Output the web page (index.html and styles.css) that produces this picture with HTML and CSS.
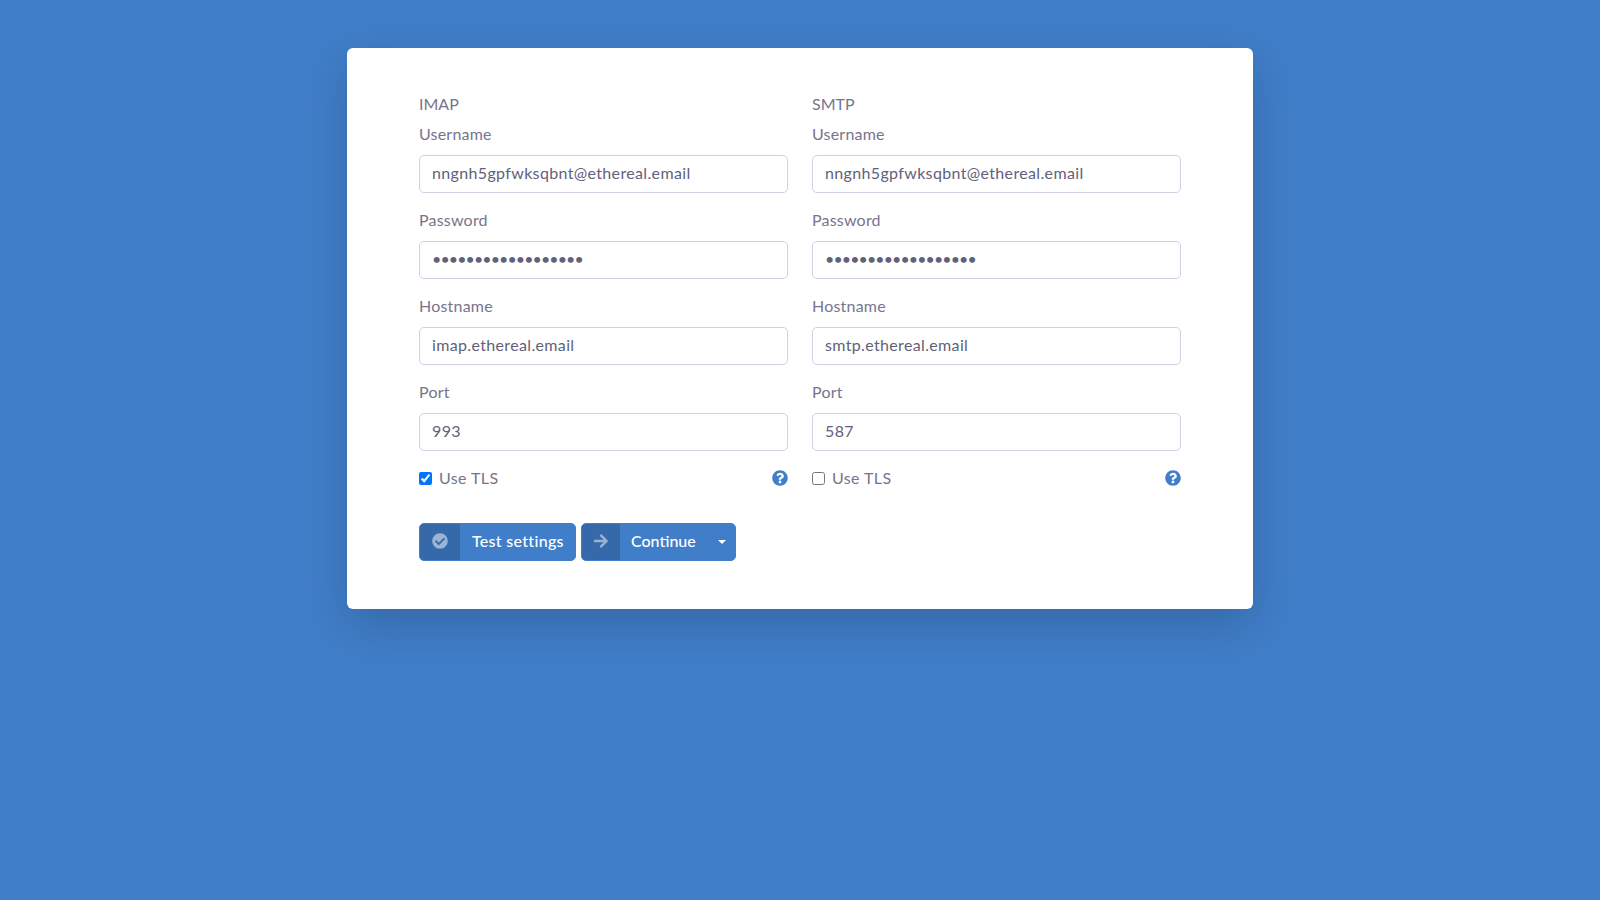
FILE: index.html
```html
<!DOCTYPE html>
<html lang="en">
<head>
    <meta charset="UTF-8">
    <meta name="viewport" content="width=device-width, initial-scale=1.0">
    <title>Account settings</title>
    <link rel="stylesheet" href="styles.css">
</head>
<body>
    <main class="card">
        <form>
            <div class="columns">
                <section class="column">
                    <h2 class="column-title">IMAP</h2>
                    <div class="form-group">
                        <label for="imapUser">Username</label>
                        <input type="text" id="imapUser" value="nngnh5gpfwksqbnt@ethereal.email">
                    </div>
                    <div class="form-group">
                        <label for="imapPass">Password</label>
                        <input type="password" id="imapPass" value="abcdefghijklmnopqr">
                    </div>
                    <div class="form-group">
                        <label for="imapHost">Hostname</label>
                        <input type="text" id="imapHost" value="imap.ethereal.email">
                    </div>
                    <div class="form-group">
                        <label for="imapPort">Port</label>
                        <input type="text" id="imapPort" value="993">
                    </div>
                    <div class="tls-row">
                        <label class="check">
                            <input type="checkbox" checked>
                            <span>Use TLS</span>
                        </label>
                        <a href="#" class="help" aria-label="Help">
                            <svg viewBox="0 0 512 512" width="16" height="16"><path fill="currentColor" d="M504 256c0 137-111 248-248 248S8 393 8 256 119 8 256 8s248 111 248 248zM262.700 90c-54.500 0-89.300 23-116.500 63.800-3.500 5.300-2.300 12.400 2.800 16.300l34.700 26.300c5.200 3.900 12.600 3 16.700-2.100 17.900-22.700 30.100-35.800 57.300-35.800 20.400 0 45.700 13.100 45.700 32.900 0 15-12.400 22.700-32.500 34-23.500 13.200-54.600 29.600-54.600 70.700V300c0 6.600 5.400 12 12 12h56c6.600 0 12-5.400 12-12v-1.300c0-28.500 83.200-29.700 83.200-106.700 0-58-60.200-102-116.600-102zM256 338c-25.400 0-46 20.600-46 46 0 25.400 20.600 46 46 46s46-20.600 46-46c0-25.400-20.600-46-46-46z"/></svg>
                        </a>
                    </div>
                </section>

                <section class="column">
                    <h2 class="column-title">SMTP</h2>
                    <div class="form-group">
                        <label for="smtpUser">Username</label>
                        <input type="text" id="smtpUser" value="nngnh5gpfwksqbnt@ethereal.email">
                    </div>
                    <div class="form-group">
                        <label for="smtpPass">Password</label>
                        <input type="password" id="smtpPass" value="abcdefghijklmnopqr">
                    </div>
                    <div class="form-group">
                        <label for="smtpHost">Hostname</label>
                        <input type="text" id="smtpHost" value="smtp.ethereal.email">
                    </div>
                    <div class="form-group">
                        <label for="smtpPort">Port</label>
                        <input type="text" id="smtpPort" value="587">
                    </div>
                    <div class="tls-row">
                        <label class="check">
                            <input type="checkbox">
                            <span>Use TLS</span>
                        </label>
                        <a href="#" class="help" aria-label="Help">
                            <svg viewBox="0 0 512 512" width="16" height="16"><path fill="currentColor" d="M504 256c0 137-111 248-248 248S8 393 8 256 119 8 256 8s248 111 248 248zM262.700 90c-54.500 0-89.300 23-116.500 63.800-3.500 5.300-2.300 12.400 2.800 16.300l34.700 26.300c5.200 3.900 12.600 3 16.700-2.100 17.900-22.700 30.100-35.800 57.300-35.800 20.400 0 45.700 13.100 45.700 32.900 0 15-12.400 22.700-32.500 34-23.500 13.200-54.600 29.600-54.600 70.700V300c0 6.600 5.400 12 12 12h56c6.600 0 12-5.400 12-12v-1.300c0-28.500 83.200-29.700 83.200-106.700 0-58-60.200-102-116.600-102zM256 338c-25.400 0-46 20.600-46 46 0 25.400 20.600 46 46 46s46-20.600 46-46c0-25.400-20.600-46-46-46z"/></svg>
                        </a>
                    </div>
                </section>
            </div>

            <div class="actions">
                <button type="button" class="btn btn-test">
                    <span class="btn-icon">
                        <svg viewBox="0 0 512 512" width="16" height="16"><path fill="currentColor" d="M504 256c0 137-111 248-248 248S8 393 8 256 119 8 256 8s248 111 248 248zM227.300 387.300l184-184c6.200-6.200 6.200-16.400 0-22.600l-22.600-22.600c-6.200-6.200-16.400-6.200-22.600 0L216 308.100l-70.100-70.100c-6.200-6.200-16.400-6.200-22.600 0l-22.600 22.600c-6.200 6.200-6.200 16.400 0 22.600l104 104c6.200 6.300 16.400 6.300 22.600 0z"/></svg>
                    </span>
                    <span class="btn-text">Test settings</span>
                </button>
                <button type="button" class="btn btn-continue">
                    <span class="btn-icon">
                        <svg viewBox="0 0 448 512" width="14" height="16"><path fill="currentColor" d="M190.500 66.900l22.200-22.200c9.400-9.400 24.600-9.400 33.900 0L441 239c9.400 9.400 9.400 24.600 0 33.900L246.600 467.300c-9.400 9.400-24.600 9.400-33.900 0l-22.200-22.200c-9.500-9.500-9.300-25 .4-34.300L311.400 296H24c-13.300 0-24-10.700-24-24v-32c0-13.300 10.700-24 24-24h287.400L190.900 101.200c-9.800-9.300-10-24.800-.4-34.300z"/></svg>
                    </span>
                    <span class="btn-text">Continue</span>
                    <span class="caret"></span>
                </button>
            </div>
        </form>
    </main>
</body>
</html>
```

FILE: styles.css
```css
* {
    box-sizing: border-box;
}

body {
    margin: 0;
    min-height: 100vh;
    background-color: #407ec9;
    font-family: 'Lato', 'Open Sans', sans-serif;
    font-size: 16px;
    line-height: 1.5;
    color: #76758c;
}

.card {
    width: 906px;
    margin: 48px auto 0;
    padding: 48px 72px;
    background-color: #fff;
    border-radius: 6px;
    box-shadow: 0 16px 48px rgba(0, 0, 0, 0.175);
}

.columns {
    display: flex;
    gap: 24px;
}

.column {
    flex: 1;
    min-width: 0;
}

.column-title {
    margin: 0 0 11px;
    font-size: 16px;
    font-weight: 400;
    line-height: 16px;
}

.form-group {
    margin-bottom: 16px;
}

.form-group label {
    display: block;
    margin-bottom: 10px;
    line-height: 22px;
    letter-spacing: 0.2px;
}

.form-group input {
    display: block;
    width: 100%;
    height: 38px;
    padding: 4px 12px 7px;
    border: 1px solid #d0d0e4;
    border-radius: 5px;
    background-color: #fff;
    font-family: inherit;
    font-size: 16px;
    letter-spacing: 0.35px;
    color: #62617a;
    outline: none;
}

.form-group input[type="password"] {
    letter-spacing: -0.9px;
}

.tls-row {
    display: flex;
    justify-content: space-between;
    align-items: center;
    height: 24px;
    margin-top: -1px;
}

.check {
    display: flex;
    align-items: center;
    gap: 7px;
    letter-spacing: 0.4px;
}

.check input {
    width: 13px;
    height: 13px;
    margin: 0;
}

.help {
    display: flex;
    color: #407ec9;
}

.actions {
    display: flex;
    gap: 5px;
    margin-top: 33px;
}

.btn {
    display: flex;
    align-items: center;
    height: 38px;
    padding: 0;
    border: 1px solid #407ec9;
    border-radius: 5px;
    background-color: #407ec9;
    font-family: inherit;
    font-size: 16px;
    font-weight: 500;
    color: #fff;
    overflow: hidden;
    cursor: pointer;
}

.btn-icon {
    display: flex;
    justify-content: center;
    align-items: center;
    align-self: stretch;
    padding-bottom: 2px;
    background-color: #3669aa;
    color: rgba(255, 255, 255, 0.5);
}

.btn-text {
    margin-left: 12px;
    padding-bottom: 3px;
}

.btn-test {
    width: 157px;
}

.btn-test .btn-icon {
    width: 40px;
}

.btn-test .btn-text {
    letter-spacing: 0.3px;
}

.btn-continue {
    width: 155px;
}

.btn-continue .btn-icon {
    width: 38px;
}

.btn-continue .btn-text {
    margin-left: 11px;
}

.caret {
    margin-left: 22px;
    border-top: 4.8px solid #fff;
    border-left: 4.8px solid transparent;
    border-right: 4.8px solid transparent;
}
```
